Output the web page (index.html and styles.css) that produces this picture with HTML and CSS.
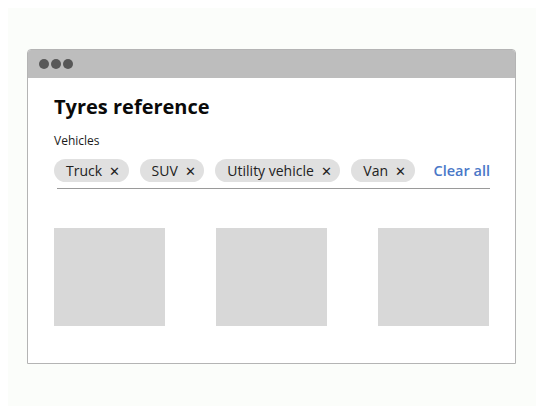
FILE: index.html
```html
<!DOCTYPE html>
<html>
<head>
<meta charset="utf-8">
<link rel="stylesheet" href="styles.css">
</head>
<body>
<div class="stage">
  <div class="window">
    <div class="titlebar">
      <span class="dot"></span><span class="dot"></span><span class="dot"></span>
    </div>
    <div class="content">
      <h1 class="title">Tyres reference</h1>
      <div class="label">Vehicles</div>
      <div class="filters">
        <div class="chips">
          <span class="chip">Truck<span class="x">✕</span></span>
          <span class="chip">SUV<span class="x">✕</span></span>
          <span class="chip">Utility vehicle<span class="x">✕</span></span>
          <span class="chip">Van<span class="x">✕</span></span>
        </div>
        <a class="clear">Clear all</a>
      </div>
      <div class="tiles">
        <div class="tile"></div>
        <div class="tile"></div>
        <div class="tile"></div>
      </div>
    </div>
  </div>
</div>
</body>
</html>
```
FILE: styles.css
```css
html, body {
  margin: 0;
  padding: 0;
  background: #ffffff;
  font-family: "Open Sans", "Noto Sans", sans-serif;
  color: #111;
}
.stage {
  margin: 8px;
  height: 398px;
  background: #fbfdfa;
  padding-top: 41px;
  padding-left: 19px;
  box-sizing: border-box;
}
.window {
  width: 489px;
  height: 315px;
  box-sizing: border-box;
  border: 1px solid #b4b4b4;
  border-radius: 4px 4px 0 0;
  background: #fff;
  overflow: hidden;
}
.titlebar {
  height: 28px;
  background: #bdbdbd;
  display: flex;
  align-items: center;
  gap: 2px;
  padding-left: 11px;
}
.dot {
  width: 10px;
  height: 10px;
  border-radius: 50%;
  background: #575757;
}
.content {
  padding: 15px 26px 0 26px;
}
.title {
  margin: 0;
  font-size: 20px;
  font-weight: 700;
  line-height: 27px;
  color: #0a0a0a;
}
.label {
  margin-top: 13px;
  font-size: 12px;
  line-height: 16px;
  color: #1a1a1a;
}
.filters {
  margin-top: 10px;
  margin-left: 3px;
  margin-right: -1px;
  display: flex;
  align-items: center;
  justify-content: space-between;
  border-bottom: 1px solid #9a9a9a;
  padding-bottom: 6px;
}
.chips {
  display: flex;
  gap: 11px;
  margin-left: -3px;
}
.chip {
  display: inline-flex;
  align-items: center;
  height: 23px;
  padding: 0 8.5px 0 12px;
  border-radius: 12px;
  background: #e0e0e0;
  font-size: 14px;
  color: #222;
}
.x {
  margin-left: 7px;
  font-size: 13px;
  color: #222;
}
.clear {
  font-size: 14.5px;
  font-weight: 600;
  color: #4a78c8;
}
.tiles {
  margin-top: 39px;
  display: flex;
  justify-content: space-between;
}
.tile {
  width: 111px;
  height: 98px;
  background: #d8d8d8;
}
```
